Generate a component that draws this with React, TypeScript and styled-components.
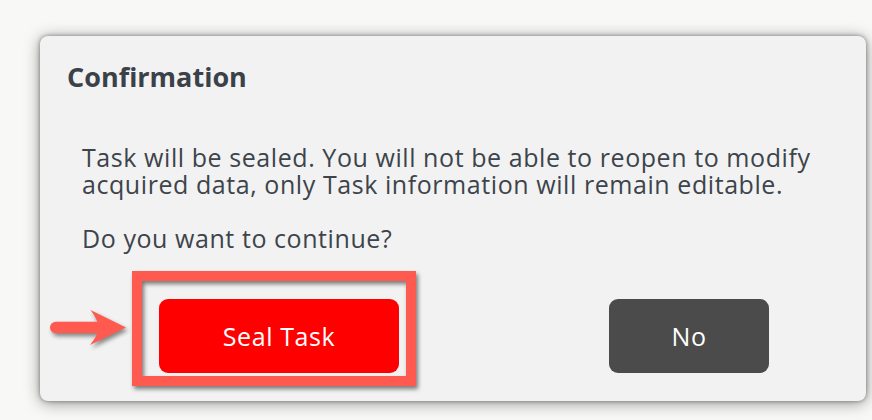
import React from "react";
import styled, { createGlobalStyle } from "styled-components";

const GlobalStyle = createGlobalStyle`
  html, body {
    margin: 0;
    padding: 0;
    background: #f8f8f7;
  }
  body {
    font-family: "Open Sans", "Liberation Sans", sans-serif;
  }
`;

const Page = styled.div`
  width: 872px;
  height: 420px;
  box-sizing: border-box;
  padding: 36px 6px 0 40px;
  overflow: hidden;
`;

const Dialog = styled.div`
  width: 826px;
  height: 365px;
  box-sizing: border-box;
  background: #f2f2f2;
  border-radius: 8px;
  box-shadow: 0 0 4px rgba(0, 0, 0, 0.4), 0 2px 16px rgba(0, 0, 0, 0.4);
  padding: 25px 0 0 27px;
  display: flex;
  flex-direction: column;
`;

const Title = styled.h2`
  margin: 0;
  font-size: 27px;
  line-height: 32px;
  font-weight: 700;
  color: #3a4148;
`;

const Body = styled.div`
  margin-top: 51px;
  padding-left: 15px;
  display: flex;
  flex-direction: column;
  gap: 27px;
`;

const Paragraph = styled.div`
  display: flex;
  flex-direction: column;
`;

const Line = styled.span`
  display: block;
  height: 27px;
  font-size: 25px;
  line-height: 27px;
  letter-spacing: 0.57px;
  color: #3d444b;
  white-space: nowrap;
`;

const Actions = styled.div`
  margin-top: 47px;
  padding: 0 97px 0 92px;
  display: flex;
  justify-content: space-between;
  align-items: center;
`;

const Button = styled.button<{ $variant: "danger" | "neutral"; $width: number }>`
  width: ${(p) => p.$width}px;
  height: 74px;
  border: none;
  border-radius: 9px;
  background: ${(p) => (p.$variant === "danger" ? "#ff0000" : "#4b4b4b")};
  color: #ffffff;
  font-family: "Open Sans", "Liberation Sans", sans-serif;
  font-size: 25px;
  letter-spacing: 0.6px;
  padding: 0;
  cursor: pointer;
`;

const Highlight = styled.div`
  position: relative;
`;

const HighlightBox = styled.div`
  position: absolute;
  left: -27px;
  top: -28px;
  width: 284px;
  height: 115px;
  box-sizing: border-box;
  border: 10px solid #fe5a4f;
  filter: drop-shadow(2px 3px 2px rgba(0, 0, 0, 0.5));
  pointer-events: none;
`;

const Arrow = styled.svg`
  position: absolute;
  left: -111px;
  top: 9px;
  overflow: visible;
  filter: drop-shadow(2px 3px 2px rgba(0, 0, 0, 0.45));
  pointer-events: none;
`;

export default function App() {
  return (
    <>
      <GlobalStyle />
      <Page>
        <Dialog>
          <Title>Confirmation</Title>
          <Body>
            <Paragraph>
              <Line>Task will be sealed. You will not be able to reopen to modify</Line>
              <Line>acquired data, only Task information will remain editable.</Line>
            </Paragraph>
            <Paragraph>
              <Line>Do you want to continue?</Line>
            </Paragraph>
          </Body>
          <Actions>
            <Highlight>
              <Button $variant="danger" $width={240}>
                Seal Task
              </Button>
              <HighlightBox />
              <Arrow width="84" height="44" viewBox="0 0 84 44">
                <rect x="2" y="13.7" width="52" height="11.6" rx="5.8" fill="#fe5a4f" />
                <path
                  d="M42.5 2 L78 19.5 L42 37 Q50 27 51 19.5 Q50 12 42.5 2 Z"
                  fill="#fe5a4f"
                />
              </Arrow>
            </Highlight>
            <Button $variant="neutral" $width={160}>
              No
            </Button>
          </Actions>
        </Dialog>
      </Page>
    </>
  );
}
